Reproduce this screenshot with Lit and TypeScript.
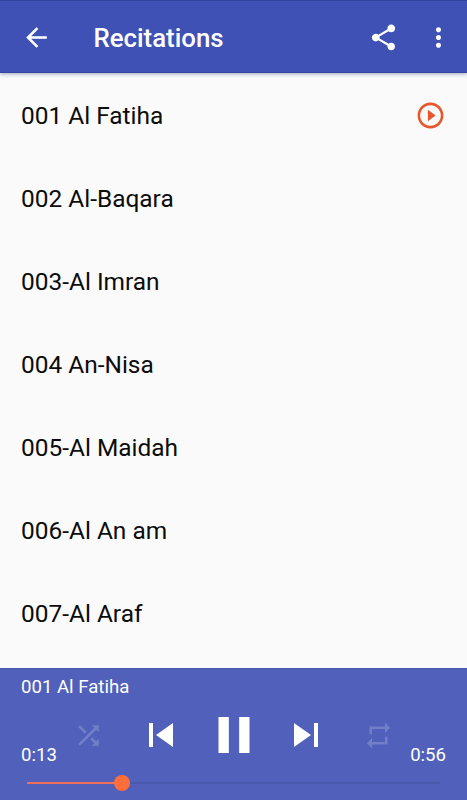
import { LitElement, html, css, svg } from "lit";
import { customElement, property, state } from "lit/decorators.js";

const ICONS: Record<string, string> = {
  back: "M20 11H7.83l5.59-5.59L12 4l-8 8 8 8 1.41-1.41L7.83 13H20v-2z",
  share:
    "M18 16.08c-.76 0-1.44.3-1.96.77L8.91 12.7c.05-.23.09-.46.09-.7s-.04-.47-.09-.7l7.05-4.11c.54.5 1.25.81 2.04.81 1.66 0 3-1.34 3-3s-1.34-3-3-3-3 1.34-3 3c0 .24.04.47.09.7L8.04 9.81C7.5 9.31 6.79 9 6 9c-1.66 0-3 1.34-3 3s1.34 3 3 3c.79 0 1.5-.31 2.04-.81l7.12 4.16c-.05.21-.08.43-.08.65 0 1.61 1.31 2.92 2.92 2.92s2.92-1.31 2.92-2.92-1.31-2.92-2.92-2.92z",
  more: "M12 8c1.1 0 2-.9 2-2s-.9-2-2-2-2 .9-2 2 .9 2 2 2zm0 2c-1.1 0-2 .9-2 2s.9 2 2 2 2-.9 2-2-.9-2-2-2zm0 6c-1.1 0-2 .9-2 2s.9 2 2 2 2-.9 2-2-.9-2-2-2z",
  playing:
    "M10 16.5l6-4.5-6-4.5v9zM12 2C6.48 2 2 6.48 2 12s4.48 10 10 10 10-4.48 10-10S17.52 2 12 2zm0 18c-4.41 0-8-3.59-8-8s3.59-8 8-8 8 3.59 8 8-3.59 8-8 8z",
  shuffle:
    "M10.59 9.17L5.41 4 4 5.41l5.17 5.17 1.42-1.41zM14.5 4l2.04 2.04L4 18.59 5.41 20 17.96 7.46 20 9.5V4h-5.5zm.33 9.41l-1.41 1.41 3.13 3.13L14.5 20H20v-5.5l-2.04 2.04-3.13-3.13z",
  previous: "M6 6h2v12H6zm3.5 6l8.5 6V6z",
  pause: "M6 19h4V5H6v14zm8-14v14h4V5h-4z",
  next: "M6 18l8.5-6L6 6v12zM16 6v12h2V6h-2z",
  repeat:
    "M7 7h10v3l4-4-4-4v3H5v6h2V7zm10 10H7v-3l-4 4 4 4v-3h12v-6h-2v4z",
};

@customElement("ui-icon")
class UiIcon extends LitElement {
  @property() name = "";

  static styles = css`
    :host {
      display: block;
      flex: none;
      width: 31px;
      height: 31px;
    }
    .glyph {
      display: block;
      width: 100%;
      height: 100%;
      fill: currentColor;
    }
  `;

  render() {
    return html`<svg class="glyph" viewBox="0 0 24 24">
      ${svg`<path d=${ICONS[this.name]}></path>`}
    </svg>`;
  }
}

@customElement("top-bar")
class TopBar extends LitElement {
  static styles = css`
    :host {
      display: flex;
      align-items: center;
      box-sizing: border-box;
      height: 73px;
      flex: none;
      padding: 1px 13px 0 21px;
      color: #fff;
      background: #3f51b5;
      border-top: 1px solid #33429a;
      border-bottom: 1px solid #36469f;
      box-shadow: 0 1px 4px rgba(40, 55, 130, 0.45);
      z-index: 1;
    }
    .title {
      flex: 1;
      margin: 1px 0 0 41.5px;
      font-size: 25.8px;
      font-weight: 500;
      line-height: 32px;
    }
    .more {
      margin-left: 24px;
    }
  `;

  render() {
    return html`
      <ui-icon name="back"></ui-icon>
      <h1 class="title">Recitations</h1>
      <ui-icon name="share"></ui-icon>
      <ui-icon class="more" name="more"></ui-icon>
    `;
  }
}

@customElement("player-bar")
class PlayerBar extends LitElement {
  @property() track = "";
  @property({ type: Number }) elapsed = 0;
  @property({ type: Number }) duration = 1;

  static styles = css`
    :host {
      display: flex;
      flex-direction: column;
      box-sizing: border-box;
      flex: none;
      height: 132px;
      padding: 5px 21px 0;
      color: #fff;
      background: #5161bb;
      border-top: 1px solid #4656ac;
    }
    .track {
      font-size: 18.6px;
      line-height: 26px;
    }
    .row {
      display: flex;
      justify-content: space-between;
      height: 67px;
    }
    .time {
      align-self: flex-end;
      width: 38px;
      font-size: 18.6px;
      line-height: 24px;
      white-space: nowrap;
    }
    .time.total {
      text-align: right;
    }
    .controls {
      display: flex;
      justify-content: space-between;
      align-items: center;
      width: 321px;
      height: 70px;
    }
    .off {
      color: #727fc8;
    }
    .shuffle {
      margin-right: 15.5px;
    }
    .repeat {
      margin-left: 15.5px;
    }
    .skip {
      width: 48px;
      height: 48px;
    }
    .pause {
      width: 62px;
      height: 62px;
    }
    .seek {
      display: flex;
      align-items: center;
      height: 16px;
      margin: 8px 6px 0;
    }
    .done {
      height: 2px;
      background: #ee6f5c;
    }
    .thumb {
      flex: none;
      width: 16px;
      height: 16px;
      margin: 0 -8px;
      border-radius: 50%;
      background: #ff6d3a;
      z-index: 1;
    }
    .rest {
      flex: 1;
      height: 2px;
      background: #4a58ab;
    }
  `;

  private clock(s: number) {
    const whole = Math.floor(s);
    return `${Math.floor(whole / 60)}:${String(whole % 60).padStart(2, "0")}`;
  }

  render() {
    const percent = (this.elapsed / this.duration) * 100;
    return html`
      <div class="track">${this.track}</div>
      <div class="row">
        <div class="time">${this.clock(this.elapsed)}</div>
        <div class="controls">
          <ui-icon class="off shuffle" name="shuffle"></ui-icon>
          <ui-icon class="skip" name="previous"></ui-icon>
          <ui-icon class="pause" name="pause"></ui-icon>
          <ui-icon class="skip" name="next"></ui-icon>
          <ui-icon class="off repeat" name="repeat"></ui-icon>
        </div>
        <div class="time total">${this.clock(this.duration)}</div>
      </div>
      <div class="seek">
        <div class="done" style="width:${percent}%"></div>
        <div class="thumb"></div>
        <div class="rest"></div>
      </div>
    `;
  }
}

@customElement("app-root")
class AppRoot extends LitElement {
  @state() private current = 0;

  private tracks = [
    "001 Al Fatiha",
    "002 Al-Baqara",
    "003-Al Imran",
    "004 An-Nisa",
    "005-Al Maidah",
    "006-Al An am",
    "007-Al Araf",
  ];

  static styles = css`
    :host {
      display: flex;
      flex-direction: column;
      height: 800px;
      overflow: hidden;
      background: #fafafa;
      font-family: Roboto, "Liberation Sans", sans-serif;
    }
    .list {
      flex: 1;
      min-height: 0;
      overflow: hidden;
      margin: 0;
      padding: 1px 0 0;
      list-style: none;
    }
    .item {
      display: flex;
      align-items: center;
      justify-content: space-between;
      box-sizing: border-box;
      height: 83px;
      padding: 0 21px;
      font-size: 24.45px;
      line-height: 30px;
      color: #0c0c0c;
    }
    .playing {
      margin: 0 0.5px 1px 0;
      color: #e8562e;
    }
  `;

  render() {
    return html`
      <top-bar></top-bar>
      <ul class="list">
        ${this.tracks.map(
          (t, i) => html`<li class="item">
            <span>${t}</span>
            ${i === this.current
              ? html`<ui-icon class="playing" name="playing"></ui-icon>`
              : null}
          </li>`
        )}
      </ul>
      <player-bar
        .track=${this.tracks[this.current]}
        .elapsed=${13}
        .duration=${56.5}
      ></player-bar>
    `;
  }
}
